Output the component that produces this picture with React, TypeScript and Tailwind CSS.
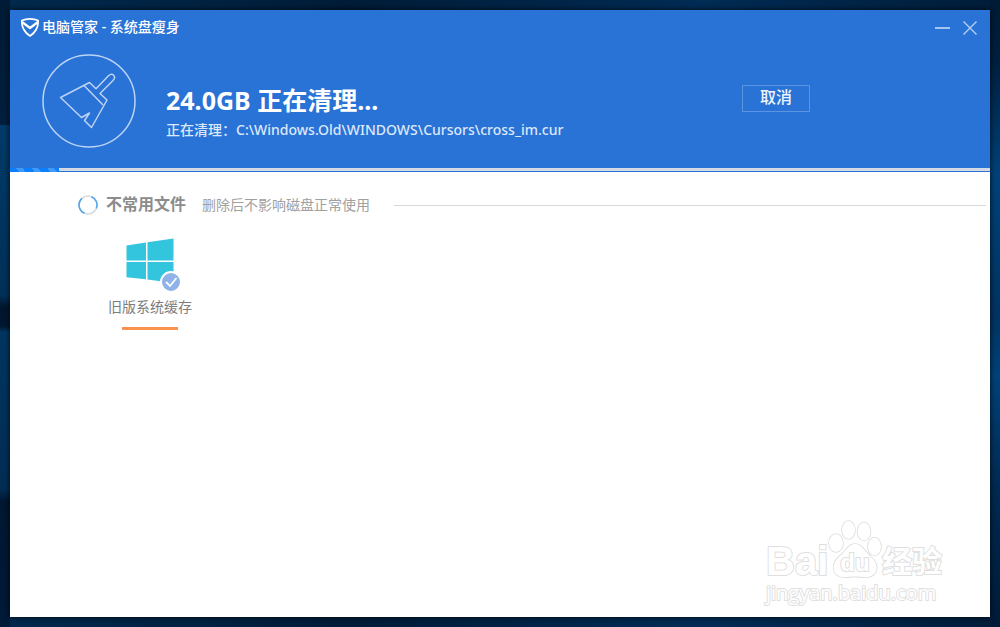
import { useState } from 'react'

const groups = [
  {
    title: '不常用文件',
    hint: '删除后不影响磁盘正常使用',
    items: [{ id: 'old-system', label: '旧版系统缓存' }],
  },
]

function ShieldIcon() {
  return (
    <svg width="20" height="20" viewBox="0 0 20 20" fill="none" stroke="#fff" strokeWidth="1.7" strokeLinejoin="round">
      <path d="M10 1.8C7 1.8 4 2.4 1.9 3.4C1.4 10 4 15 10 19C16 15 18.6 10 18.1 3.4C16 2.4 13 1.8 10 1.8Z" />
      <path d="M2 5L10 11L18 5" strokeWidth="2.2" />
    </svg>
  )
}

function BroomIcon() {
  return (
    <svg width="94" height="94" viewBox="0 0 94 94" fill="none" stroke="#bcd3f5" strokeWidth="1.5" strokeLinejoin="round">
      <circle cx="47" cy="47" r="46" />
      <path d="M18.5 43.5L47.500 28.5L54 34.800L66.500 21.8C70.5 18 74.8 22.5 71 26.5L58 39.5L65 46L49.500 73.5L42.500 66.5L47.500 59L39.500 63.5Z" />
      <path d="M42 31.500L61 51" />
    </svg>
  )
}

function Spinner() {
  return (
    <svg width="20" height="20" viewBox="0 0 20 20" fill="none" strokeWidth="1.5">
      <circle cx="10" cy="10" r="9" stroke="#d6d9dc" />
      <path d="M13.5 1.7A9 9 0 0 1 18.3 13.4" stroke="#4fa3ea" />
      <path d="M6.5 18.3A9 9 0 0 1 4 3.3" stroke="#4fa3ea" />
    </svg>
  )
}

function WindowsIcon() {
  return (
    <svg width="48" height="45" viewBox="0 0 48 45" fill="#33c4de">
      <path d="M0.5 7.5L20 4.5V22.600H0.5ZM21.500 4.200L47.500 0.5V22.600H21.500ZM0.5 24H20V41.200L0.5 39.200ZM21.500 24H47.500V45L21.500 41.500Z" />
    </svg>
  )
}

function Watermark() {
  return (
    <div className="pointer-events-none absolute right-11 bottom-3 w-[180px] text-white [-webkit-text-stroke:2px_#dfdfdf] [paint-order:stroke]">
      <div className="flex h-[66px] items-end leading-10">
        <span className="w-[62px] font-['Liberation_Sans',sans-serif] text-[40px] font-bold">Bai</span>
        <span className="relative flex h-[66px] w-[54px] shrink-0 items-end justify-center">
          <svg className="absolute inset-0" width="54" height="66" viewBox="0 0 54 66" fill="#fff" stroke="#dcdcdc" strokeWidth="1.6">
            <ellipse cx="8" cy="28" rx="7" ry="9" />
            <ellipse cx="20.5" cy="15" rx="6.5" ry="9" />
            <ellipse cx="36" cy="16.5" rx="6.5" ry="9" />
            <ellipse cx="46.5" cy="31.5" rx="6.5" ry="9" />
            <path d="M27 29C20 29 18 36 12 41C3 48 3 61 15 62C20 62.5 22 61.5 27 61.5C32 61.5 35 62.5 40 62C51 60 51 49 43 42C37 37 34 29 27 29Z" />
          </svg>
          <span className="relative font-['Liberation_Sans',sans-serif] text-2xl leading-9 font-bold">du</span>
        </span>
        <span className="text-[30px] font-bold whitespace-nowrap">经验</span>
      </div>
      <div className="font-['Open_Sans',sans-serif] text-xl leading-6 font-medium whitespace-nowrap">jingyan.baidu.com</div>
    </div>
  )
}

export default function App() {
  const [checked, setChecked] = useState<Record<string, boolean>>({ 'old-system': true })
  const progress = 5

  return (
    <div
      lang="zh-CN"
      className="flex min-h-screen flex-col bg-[#00254a] bg-[linear-gradient(180deg,#001b35_0%,#001f3e_20%,#003a68_20%,#003158_47%,#00162e_49%,#001731_52%,#003660_53%,#002d54_78%,#001732_80%,#001a38_100%),linear-gradient(180deg,#001b35_0%,#002040_10%,#00427a_28%,#003462_50%,#00427a_60%,#002a52_78%,#001b38_100%),linear-gradient(90deg,#002a4e_0%,#001c38_35%,#002c55_70%,#001d3a_100%)] bg-[length:10px_100%,10px_100%,100%_100%] bg-[position:left_top,right_top,left_top] bg-no-repeat p-2.5 font-['Noto_Sans','Noto_Sans_CJK_SC',sans-serif]"
    >
      <main className="relative flex grow flex-col bg-white shadow-[0_0_6px_#000c]">
        <header className="bg-[#2972d6] text-white">
          <div className="flex h-9 items-center justify-between pr-3 pl-2.5">
            <h1 className="flex items-center gap-0.5 pb-0.5 text-sm leading-5 font-medium">
              <ShieldIcon />
              电脑管家 - 系统盘瘦身
            </h1>
            <div className="flex gap-3">
              <button type="button" aria-label="最小化">
                <svg width="15" height="16" viewBox="0 0 15 16" stroke="#c6daf6" strokeWidth="1.6">
                  <path d="M0 8H15" />
                </svg>
              </button>
              <button type="button" aria-label="关闭">
                <svg width="16" height="16" viewBox="0 0 16 16" stroke="#b4cef4" strokeWidth="1.4">
                  <path d="M1.5 1.5L14.5 14.5M14.5 1.5L1.5 14.5" />
                </svg>
              </button>
            </div>
          </div>

          <div className="flex items-start px-8 pt-2 pb-5">
            <BroomIcon />
            <div className="grow pt-[30px] pl-[30px]">
              <h2 className="text-[25px] leading-8 font-bold">24.0GB 正在清理...</h2>
              <p className="text-sm leading-7 font-medium text-[#dce8fa]">
                正在清理：C:\Windows.Old\WINDOWS\Cursors\cross_im.cur
              </p>
            </div>
            <button
              type="button"
              className="mt-[31px] mr-[148px] h-[27px] w-[68px] border border-[#5c94e1] pb-1 text-base leading-5 font-medium text-[#f0f5fd]"
            >
              取消
            </button>
          </div>

          <div className="h-1 border-b border-[#2972d6] bg-[#d3dae6]" role="progressbar" aria-label="清理进度" aria-valuenow={progress}>
            <div
              className="h-1 bg-[repeating-linear-gradient(50deg,#0a80ff_0px,#0a80ff_7px,#3f9afa_7px,#3f9afa_12px)]"
              style={{ width: `${progress}%` }}
            />
          </div>
        </header>

        {groups.map((group) => (
          <section key={group.title} className="pt-4 pr-1 pl-[68px]">
            <div className="flex items-center">
              <Spinner />
              <h3 className="ml-2 pb-0.5 text-base leading-8 font-bold text-[#8c8c8c]">{group.title}</h3>
              <p className="ml-4 text-sm leading-8 text-[#a0a0a0]">{group.hint}</p>
              <div className="ml-6 h-px grow bg-[#d9d9d9]" />
            </div>
            <ul className="flex px-6 pt-4">
              {group.items.map((item) => (
                <li key={item.id}>
                  <label className="flex w-24 flex-col items-center">
                    <span className="relative">
                      <WindowsIcon />
                      <input
                        type="checkbox"
                        checked={!!checked[item.id]}
                        onChange={(e) => setChecked({ ...checked, [item.id]: e.target.checked })}
                        className="peer absolute -right-2 -bottom-2.5 h-[22px] w-[22px] appearance-none rounded-full border-2 border-white bg-[#d6d6d6] checked:bg-[#8fb2e9]"
                      />
                      <svg
                        className="pointer-events-none absolute -right-2 -bottom-2.5 hidden peer-checked:block"
                        width="22"
                        height="22"
                        viewBox="0 0 22 22"
                        fill="none"
                        stroke="#fff"
                        strokeWidth="1.8"
                      >
                        <path d="M6 11L10 15L16.5 7" />
                      </svg>
                    </span>
                    <span className="mt-3 text-sm leading-6 text-[#7d7d7d]">{item.label}</span>
                    <span className="mt-2 h-[3px] w-14 bg-[#fb9350]" />
                  </label>
                </li>
              ))}
            </ul>
          </section>
        ))}

        <Watermark />
      </main>
    </div>
  )
}
